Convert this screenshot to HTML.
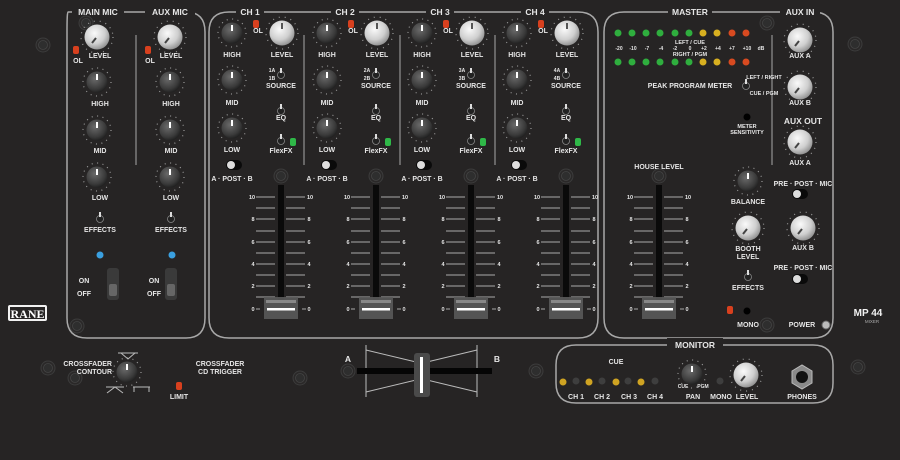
<!DOCTYPE html>
<html><head><meta charset="utf-8"><style>
html,body{margin:0;padding:0;background:#262424;}
svg{display:block}
text{font-family:"Liberation Sans",sans-serif;font-weight:bold;fill:#e6e6e6;text-anchor:middle}
.s{font-size:7px}.t{font-size:5px;fill:#aaa;font-weight:normal}.h{font-size:8.5px}
</style></head><body>
<svg width="900" height="460" viewBox="0 0 900 460" xmlns="http://www.w3.org/2000/svg">
<defs>
<radialGradient id="gw" cx="40%" cy="35%" r="70%"><stop offset="0" stop-color="#fafafa"/><stop offset="0.6" stop-color="#cfcfcf"/><stop offset="1" stop-color="#8a8a8a"/></radialGradient>
<radialGradient id="gd" cx="40%" cy="35%" r="70%"><stop offset="0" stop-color="#6a6a6a"/><stop offset="0.7" stop-color="#3a3a3a"/><stop offset="1" stop-color="#1c1c1c"/></radialGradient>
<g id="kd"><circle r="14" fill="none" stroke="#999" stroke-width="1.2" stroke-dasharray="1 4.5"/><circle r="10.5" fill="url(#gd)"/><rect x="-1" y="-8" width="2" height="6" fill="#fff"/></g>
<g id="kw"><circle r="16" fill="none" stroke="#999" stroke-width="1.2" stroke-dasharray="1 5"/><circle r="12.5" fill="url(#gw)"/><rect x="-1" y="-10" width="2" height="6" fill="#555"/></g>
<g id="kwa"><circle r="16" fill="none" stroke="#999" stroke-width="1.2" stroke-dasharray="1 5"/><circle r="12.5" fill="url(#gw)"/><path d="M-5 6 L-1 1" stroke="#444" stroke-width="2"/></g>
<g id="tg"><circle r="3.5" fill="#222" stroke="#888" stroke-width="0.8"/><rect x="-1" y="-7" width="2" height="5" fill="#ddd"/></g>
<g id="scr"><circle r="7" fill="#2a2828" stroke="#3c3c3c"/><circle r="4.5" fill="#2e2e2e" stroke="#444" stroke-width="0.8"/></g>
<g id="led-r"><rect x="-3" y="-4" width="6" height="8" rx="2" fill="#d8401e"/></g>
<g id="fad">
<rect x="-3" y="0" width="6" height="118" fill="#0a0a0a"/>
<g stroke="#aaa" stroke-width="1">
<path d="M-25 12h19M5 12h19M-25 23h19M5 23h19M-25 34h19M5 34h19M-25 46h19M5 46h19M-25 57h19M5 57h19M-25 68h19M5 68h19M-25 79h19M5 79h19M-25 90h19M5 90h19M-25 101h19M5 101h19M-25 112h19M5 112h19M-25 124h4M21 124h4"/>
</g>
<g class="t" style="font-size:5.5px;fill:#ddd"><text x="-29" y="14">10</text><text x="29" y="14">10</text><text x="-28" y="36">8</text><text x="28" y="36">8</text><text x="-28" y="59">6</text><text x="28" y="59">6</text><text x="-28" y="81">4</text><text x="28" y="81">4</text><text x="-28" y="103">2</text><text x="28" y="103">2</text><text x="-28" y="126">0</text><text x="28" y="126">0</text></g>
<rect x="-17" y="112" width="34" height="22" fill="#5a5a5a" opacity="0.9"/><rect x="-15" y="115" width="30" height="3" fill="#888"/><rect x="-14" y="123" width="28" height="2.5" fill="#fff"/>
</g>
<g id="sw"><rect x="-8" y="-5" width="16" height="10" rx="5" fill="#0a0a0a"/><circle cx="-3" r="4" fill="#ddd"/></g>
</defs>

<g fill="none" stroke="#a8a8a8" stroke-width="1.5">
<path d="M88 12 H68 Q67 12 67 32 V318 Q67 338 87 338 H186 Q205 338 205 318 V32 Q205 12 186 12 H90"/>
<path d="M229 12 Q209 12 209 32 V318 Q209 338 229 338 H578 Q598 338 598 318 V32 Q598 12 578 12 Z"/>
<path d="M624 12 Q604 12 604 32 V318 Q604 338 624 338 H813 Q833 338 833 318 V32 Q833 12 813 12 Z"/>
<path d="M576 345 Q556 345 556 365 V383 Q556 403 576 403 H813 Q833 403 833 383 V365 Q833 345 813 345 Z"/>
</g>
<g fill="#262424">
<rect x="72" y="4" width="52" height="12"/><rect x="145" y="4" width="50" height="12"/>
<rect x="236" y="4" width="28" height="12"/><rect x="331" y="4" width="28" height="12"/><rect x="426" y="4" width="28" height="12"/><rect x="521" y="4" width="28" height="12"/>
<rect x="668" y="4" width="44" height="12"/><rect x="780" y="4" width="40" height="12"/>
<rect x="667" y="338" width="56" height="12"/>
</g>
<g class="h"><text x="98" y="15">MAIN MIC</text><text x="170" y="15">AUX MIC</text>
<text x="250" y="15">CH 1</text><text x="345" y="15">CH 2</text><text x="440" y="15">CH 3</text><text x="535" y="15">CH 4</text>
<text x="690" y="15">MASTER</text><text x="800" y="15">AUX IN</text><text x="695" y="348">MONITOR</text></g>

<g stroke="#a8a8a8" stroke-width="1"><path d="M136 35V165M304 35V165M400 35V165M495 35V165M772 35V165"/></g>

<use href="#scr" x="86" y="23"/><use href="#scr" x="43" y="45"/><use href="#scr" x="855" y="44"/><use href="#scr" x="767" y="23"/>
<use href="#kwa" x="97" y="37"/><use href="#kwa" x="170" y="37"/>
<use href="#led-r" x="76" y="50"/><use href="#led-r" x="148" y="50"/>
<g class="s"><text x="78" y="63">OL</text><text x="150" y="63">OL</text>
<text x="100" y="58">LEVEL</text><text x="171" y="58">LEVEL</text>
<text x="100" y="106">HIGH</text><text x="171" y="106">HIGH</text>
<text x="100" y="153">MID</text><text x="171" y="153">MID</text>
<text x="100" y="200">LOW</text><text x="171" y="200">LOW</text>
<text x="100" y="232">EFFECTS</text><text x="171" y="232">EFFECTS</text>
<text x="84" y="283">ON</text><text x="84" y="296">OFF</text><text x="154" y="283">ON</text><text x="154" y="296">OFF</text></g>
<use href="#kd" x="97" y="82"/><use href="#kd" x="170" y="82"/>
<use href="#kd" x="97" y="130"/><use href="#kd" x="170" y="130"/>
<use href="#kd" x="97" y="177"/><use href="#kd" x="170" y="177"/>
<use href="#tg" x="100" y="219"/><use href="#tg" x="171" y="219"/>
<circle cx="100" cy="255" r="3.5" fill="#3aa0e0"/><circle cx="172" cy="255" r="3.5" fill="#3aa0e0"/>
<rect x="107" y="268" width="12" height="32" rx="3" fill="#3a3a3a"/><rect x="109" y="284" width="8" height="12" rx="2" fill="#666"/>
<rect x="165" y="268" width="12" height="32" rx="3" fill="#3a3a3a"/><rect x="167" y="284" width="8" height="12" rx="2" fill="#666"/>
<use href="#scr" x="77" y="326"/>

<g id="ch">
<use href="#kd" x="232" y="33"/><use href="#kw" x="282" y="33"/><use href="#led-r" x="256" y="24"/>
<use href="#kd" x="232" y="80"/><use href="#kd" x="232" y="128"/>
<use href="#tg" x="281" y="75"/><use href="#tg" x="281" y="111"/><use href="#tg" x="281" y="141"/>
<rect x="290" y="138" width="6" height="8" rx="2" fill="#2fb848"/>
<use href="#sw" x="234" y="165"/><use href="#fad" x="281" y="185"/>
<use href="#scr" x="281" y="176"/>
</g>
<use href="#ch" x="95"/><use href="#ch" x="190"/><use href="#ch" x="285"/>
<g class="s">
<text x="232" y="57">HIGH</text><text x="282" y="57">LEVEL</text><text x="258" y="33">OL</text><text x="232" y="105">MID</text><text x="232" y="152">LOW</text>
<text x="281" y="88">SOURCE</text><text x="281" y="120">EQ</text><text x="281" y="153">FlexFX</text><text x="232" y="181">A · POST · B</text>
<text x="327" y="57">HIGH</text><text x="377" y="57">LEVEL</text><text x="353" y="33">OL</text><text x="327" y="105">MID</text><text x="327" y="152">LOW</text>
<text x="376" y="88">SOURCE</text><text x="376" y="120">EQ</text><text x="376" y="153">FlexFX</text><text x="327" y="181">A · POST · B</text>
<text x="422" y="57">HIGH</text><text x="472" y="57">LEVEL</text><text x="448" y="33">OL</text><text x="422" y="105">MID</text><text x="422" y="152">LOW</text>
<text x="471" y="88">SOURCE</text><text x="471" y="120">EQ</text><text x="471" y="153">FlexFX</text><text x="422" y="181">A · POST · B</text>
<text x="517" y="57">HIGH</text><text x="567" y="57">LEVEL</text><text x="543" y="33">OL</text><text x="517" y="105">MID</text><text x="517" y="152">LOW</text>
<text x="566" y="88">SOURCE</text><text x="566" y="120">EQ</text><text x="566" y="153">FlexFX</text><text x="517" y="181">A · POST · B</text>
</g>
<g class="t"><text x="272" y="72">1A</text><text x="272" y="80">1B</text><text x="367" y="72">2A</text><text x="367" y="80">2B</text><text x="462" y="72">3A</text><text x="462" y="80">3B</text><text x="557" y="72">4A</text><text x="557" y="80">4B</text></g>

<g id="leds">
<circle cx="618" cy="33" r="3.5" fill="#2fae3e"/><circle cx="632" cy="33" r="3.5" fill="#2fae3e"/><circle cx="646" cy="33" r="3.5" fill="#2fae3e"/><circle cx="660" cy="33" r="3.5" fill="#2fae3e"/><circle cx="675" cy="33" r="3.5" fill="#2fae3e"/><circle cx="689" cy="33" r="3.5" fill="#2fae3e"/><circle cx="703" cy="33" r="3.5" fill="#d8b020"/><circle cx="717" cy="33" r="3.5" fill="#d8b020"/><circle cx="732" cy="33" r="3.5" fill="#d84a20"/><circle cx="746" cy="33" r="3.5" fill="#d84a20"/>
</g>
<use href="#leds" y="29"/>
<g class="t" style="font-size:5px"><text x="619" y="50">-20</text><text x="633" y="50">-10</text><text x="647" y="50">-7</text><text x="661" y="50">-4</text><text x="675" y="50">-2</text><text x="690" y="50">0</text><text x="704" y="50">+2</text><text x="718" y="50">+4</text><text x="732" y="50">+7</text><text x="747" y="50">+10</text><text x="761" y="50">dB</text></g>
<g class="s" style="font-size:5.5px"><text x="690" y="44">LEFT / CUE</text><text x="690" y="56">RIGHT / PGM</text><text x="764" y="79">LEFT / RIGHT</text><text x="764" y="95">CUE / PGM</text><text x="747" y="128">METER</text><text x="747" y="134">SENSITIVITY</text></g>
<text class="s" x="690" y="88">PEAK PROGRAM METER</text>
<use href="#tg" x="746" y="86"/>
<circle cx="747" cy="117" r="3.5" fill="#000"/>
<use href="#kwa" x="800" y="40"/><use href="#kwa" x="800" y="87"/><use href="#kwa" x="800" y="142"/><use href="#kwa" x="803" y="228"/>
<g class="s"><text x="800" y="58">AUX A</text><text x="800" y="105">AUX B</text><text x="800" y="165">AUX A</text><text x="803" y="250">AUX B</text>
<text x="803" y="186">PRE · POST · MIC</text><text x="803" y="270">PRE · POST · MIC</text>
<text x="659" y="169">HOUSE LEVEL</text><text x="748" y="204">BALANCE</text><text x="748" y="251">BOOTH</text><text x="748" y="259">LEVEL</text><text x="748" y="290">EFFECTS</text><text x="748" y="327">MONO</text><text x="802" y="327">POWER</text></g>
<text class="h" x="803" y="124">AUX OUT</text>
<use href="#sw" x="800" y="194"/><use href="#sw" x="800" y="279"/>
<use href="#fad" x="659" y="185"/><use href="#scr" x="659" y="176"/>
<use href="#kd" x="748" y="181"/><use href="#kwa" x="748" y="228"/><use href="#tg" x="748" y="277"/>
<use href="#led-r" x="730" y="310"/><circle cx="747" cy="311" r="3.5" fill="#000"/><use href="#scr" x="767" y="325"/>
<circle cx="826" cy="325" r="4" fill="#bbb" stroke="#666"/>

<text x="868" y="316" style="font-size:10px;fill:#f2f2f2">MP 44</text><text x="872" y="323" class="t" style="font-size:4.5px">MIXER</text>
<rect x="8" y="305" width="39" height="16" rx="2" fill="#f2f2f2"/><rect x="10" y="307" width="35" height="12" fill="#262424"/>
<text x="27.5" y="318" style="font-size:12px;font-family:'Liberation Serif',serif;fill:#fff">RANE</text>

<use href="#scr" x="48" y="368"/><use href="#scr" x="75" y="378"/><use href="#scr" x="300" y="378"/><use href="#scr" x="348" y="371"/><use href="#scr" x="536" y="371"/><use href="#scr" x="858" y="367"/>
<g class="s"><text x="112" y="366" style="text-anchor:end">CROSSFADER</text><text x="112" y="374" style="text-anchor:end">CONTOUR</text>
<text x="220" y="366">CROSSFADER</text><text x="220" y="374">CD TRIGGER</text><text x="179" y="399">LIMIT</text></g>
<use href="#kd" x="127" y="372"/><use href="#led-r" x="179" y="386"/>
<g stroke="#bbb" fill="none" stroke-width="1"><path d="M118 353h20M121 353l7 6l7-6M106 387h18M107 393l8-6l8 6M133 387h17M134 387v5M149 387v5"/></g>
<text class="h" x="348" y="362">A</text><text class="h" x="497" y="362">B</text>
<g stroke="#bbb" fill="none" stroke-width="1"><path d="M366 345v52M477 345v52M366 350l50 12M366 392l50-12M477 350l-50 12M477 392l-50-12"/></g>
<rect x="357" y="368" width="135" height="6" fill="#050505"/>
<rect x="414" y="353" width="16" height="44" rx="3" fill="#4a4a4a"/><rect x="420" y="357" width="3" height="36" fill="#fff"/>

<text class="s" x="616" y="364">CUE</text>
<g><circle cx="563" cy="382" r="3.5" fill="#cfa322"/><circle cx="576" cy="381" r="3.5" fill="#3e3e3e"/><circle cx="589" cy="382" r="3.5" fill="#cfa322"/><circle cx="602" cy="381" r="3.5" fill="#3e3e3e"/><circle cx="616" cy="382" r="3.5" fill="#cfa322"/><circle cx="628" cy="381" r="3.5" fill="#3e3e3e"/><circle cx="641" cy="382" r="3.5" fill="#cfa322"/><circle cx="655" cy="381" r="3.5" fill="#3e3e3e"/></g>
<g class="s"><text x="576" y="399">CH 1</text><text x="602" y="399">CH 2</text><text x="629" y="399">CH 3</text><text x="655" y="399">CH 4</text><text x="693" y="399">PAN</text><text x="721" y="399">MONO</text><text x="747" y="399">LEVEL</text><text x="802" y="399">PHONES</text></g>
<g class="t"><text x="683" y="388">CUE</text><text x="703" y="388">PGM</text></g>
<use href="#kd" x="692" y="374"/><circle cx="720" cy="381" r="3.5" fill="#3e3e3e"/><use href="#kwa" x="746" y="375"/>
<path d="M792 371l10-6l10 6v12l-10 6l-10-6z" fill="#8a8a8a" stroke="#bbb"/><circle cx="802" cy="377" r="6" fill="#111"/>
</svg>
</body></html>
